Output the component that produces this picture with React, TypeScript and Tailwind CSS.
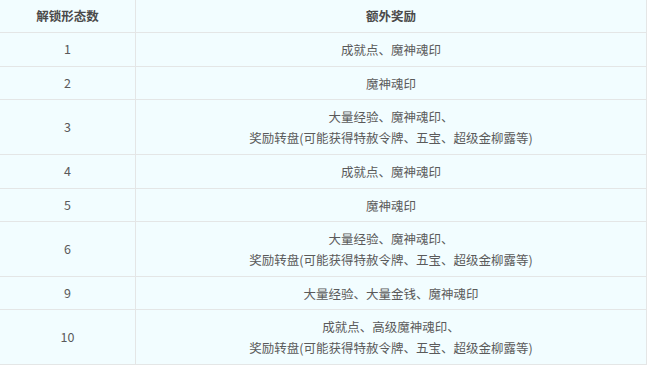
import React from "react";

const rows: { n: string; lines: string[]; h: string }[] = [
  { n: "1", lines: ["成就点、魔神魂印"], h: "h-[34px]" },
  { n: "2", lines: ["魔神魂印"], h: "h-[33px]" },
  { n: "3", lines: ["大量经验、魔神魂印、", "奖励转盘(可能获得特赦令牌、五宝、超级金柳露等)"], h: "h-[55px]" },
  { n: "4", lines: ["成就点、魔神魂印"], h: "h-[34px]" },
  { n: "5", lines: ["魔神魂印"], h: "h-[33px]" },
  { n: "6", lines: ["大量经验、魔神魂印、", "奖励转盘(可能获得特赦令牌、五宝、超级金柳露等)"], h: "h-[55px]" },
  { n: "9", lines: ["大量经验、大量金钱、魔神魂印"], h: "h-[33px]" },
  { n: "10", lines: ["成就点、高级魔神魂印、", "奖励转盘(可能获得特赦令牌、五宝、超级金柳露等)"], h: "h-[55px]" },
];

export default function App() {
  return (
    <div
      className="w-[650px] h-[365px] bg-white overflow-hidden"
      style={{ fontFamily: '"Microsoft YaHei", "Noto Sans CJK SC", "Noto Sans", sans-serif' }}
    >
      <div className="w-[647px] bg-[#f2fdff] border-r border-[#e4e6e6] text-[12.5px] text-[#5a5a5a]">
        <div className="flex h-[33px] border-b border-[#e4e6e6] font-bold text-[#4a4a4a]">
          <div className="w-[136px] border-r border-[#e4e6e6] flex items-center justify-center">解锁形态数</div>
          <div className="flex-1 flex items-center justify-center">额外奖励</div>
        </div>
        {rows.map((r) => (
          <div key={r.n} className={`flex border-b border-[#e4e6e6] ${r.h}`}>
            <div className="w-[136px] border-r border-[#e4e6e6] flex items-center justify-center">{r.n}</div>
            <div className="flex-1 flex flex-col items-center justify-center leading-[21px]">
              {r.lines.map((l, i) => (
                <div key={i}>{l}</div>
              ))}
            </div>
          </div>
        ))}
      </div>
    </div>
  );
}
